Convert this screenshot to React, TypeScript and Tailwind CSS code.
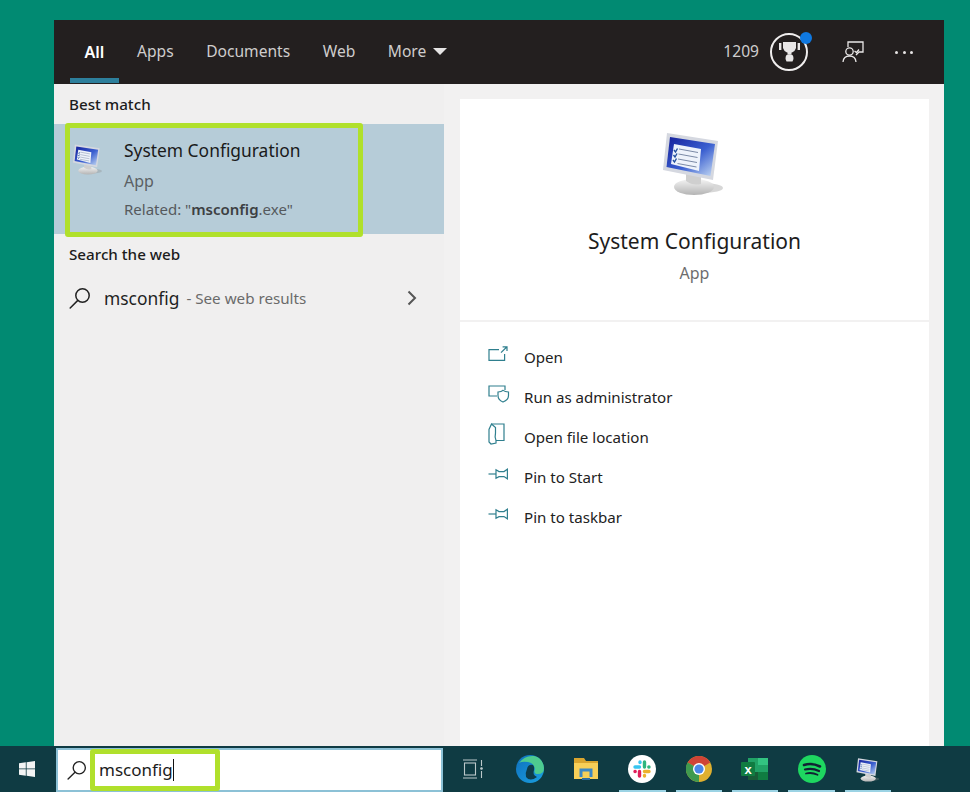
import React from "react";

function Monitor({ size, className = "" }: { size: number; className?: string }) {
  const id = `m${size}`;
  return (
    <svg width={size} height={size} viewBox="0 0 66 66" className={className}>
      <defs>
        <linearGradient id={`${id}s`} x1="0" y1="0" x2="1" y2="1">
          <stop offset="0" stopColor="#16209a" />
          <stop offset="0.55" stopColor="#3a5fd0" />
          <stop offset="1" stopColor="#c6dbf4" />
        </linearGradient>
        <linearGradient id={`${id}b`} x1="0" y1="0" x2="0" y2="1">
          <stop offset="0" stopColor="#f4f4f4" />
          <stop offset="1" stopColor="#b4b4b4" />
        </linearGradient>
      </defs>
      <ellipse cx="44" cy="58" rx="20" ry="5" fill="#8d8d8d" opacity="0.35" />
      <ellipse cx="35" cy="57" rx="20" ry="8" fill={`url(#${id}b)`} />
      <path d="M27 43 L42 47 L42 54 Q34 56 27 51 Z" fill="#cfcfcf" />
      <path d="M8 3 L59 11 L54 50 L4 40 Z" fill="#d5d8e0" />
      <path d="M11 7 L56 14 L51.5 46 L7.5 37 Z" fill={`url(#${id}s)`} />
      <path d="M15 14 L42 19 L40 41 L12 34 Z" fill="#eef3fb" />
      <path d="M20 19 L39 22.5 M19.5 24 L38.5 27.5 M19 29 L38 32.5 M18.5 33.5 L37.5 37" stroke="#7b8aa6" strokeWidth="1" />
      <path d="M15 20 L16.5 22 L18.5 18.5 M14.5 25 L16 27 L18 23.5 M14 30 L15.5 32 L17.5 28.5" stroke="#24509f" strokeWidth="1.4" fill="none" />
    </svg>
  );
}

function SearchIcon({ size, color }: { size: number; color: string }) {
  return (
    <svg width={size} height={size} viewBox="0 0 22 22" fill="none" stroke={color} strokeWidth="1.5">
      <circle cx="13.5" cy="8.5" r="6.7" />
      <path d="M8.8 13.4 L1.2 21" strokeLinecap="round" />
    </svg>
  );
}

const actionStroke = "#2f7f8e";

function OpenIcon() {
  return (
    <svg width="20" height="16" viewBox="0 0 20 16" fill="none" stroke={actionStroke} strokeWidth="1.2">
      <path d="M11 3.6 H1 V14.4 H16.6 V8" />
      <path d="M13 6.6 L19 0.8 M14.6 0.8 H19 V5" />
    </svg>
  );
}
function ShieldIcon() {
  return (
    <svg width="22" height="18" viewBox="0 0 22 18" fill="none" stroke={actionStroke} strokeWidth="1.2">
      <path d="M9 11 H1 V1 H17 V5" />
      <path d="M10 7 Q13.5 7 15 5.4 Q17 7 20.5 7 V10.5 Q20.5 15 15 17 Q10 15 10 10.5 Z" />
    </svg>
  );
}
function FolderIcon() {
  return (
    <svg width="18" height="22" viewBox="0 0 18 22" fill="none" stroke={actionStroke} strokeWidth="1.2">
      <path d="M3.5 1 H16 V17.5 H8" />
      <path d="M3.5 1 L7.5 4.5 V10 Q6.5 14 8 17.5 V20 L3 21 L1 19 V6.5 Z" />
    </svg>
  );
}
function PinIcon() {
  return (
    <svg width="20" height="12" viewBox="0 0 20 12" fill="none" stroke={actionStroke} strokeWidth="1.2">
      <path d="M0.5 6 H8" />
      <path d="M8 1.8 L11 3.6 H16 L19.4 1.2 V10.8 L16 8.6 H11 L8 10.2 Z" />
    </svg>
  );
}

function Trophy() {
  return (
    <div className="relative w-[38px] h-[38px] rounded-full border-[2.5px] border-[#f0eeee] flex items-center justify-center">
      <svg width="21" height="20" viewBox="0 0 21 20" fill="#e9e7e7">
        <rect x="0" y="1" width="2.4" height="7" />
        <rect x="18.6" y="1" width="2.4" height="7" />
        <path d="M4 0 H17 V6 Q16 9.5 13 10.5 H8 Q5 9.5 4 6 Z" />
        <rect x="8.5" y="10" width="4" height="2.5" />
        <path d="M7.5 13 Q10.5 11.5 13.5 13 Q15.5 16 13.5 19.5 H7.5 Q5.5 16 7.5 13 Z" />
      </svg>
      <span className="absolute -top-[3px] -right-[6px] w-[12px] h-[12px] rounded-full bg-[#0f78e0]" />
    </div>
  );
}

function Feedback() {
  return (
    <svg width="22" height="22" viewBox="0 0 22 22" fill="none" stroke="#e9e7e7" strokeWidth="1.3">
      <path d="M6 6 V1 H21 V11 H17 L14 14" />
      <circle cx="7.5" cy="10.5" r="3.7" />
      <path d="M1 21 Q1.5 15 7.5 15 Q13.5 15 14 21" />
      <path d="M12.5 10 L14.5 11.5 L17 8.5" />
    </svg>
  );
}

function TaskView() {
  return (
    <svg width="22" height="20" viewBox="0 0 22 20" fill="none" stroke="#bcc8ca" strokeWidth="1.1">
      <path d="M1 1 H15 M1 19 H15" />
      <rect x="2.5" y="4" width="11" height="12" />
      <path d="M19.5 1 V7 M19.5 12 V19" />
      <circle cx="19.5" cy="9.5" r="0.8" fill="#bcc8ca" />
    </svg>
  );
}

function Edge() {
  return (
    <svg width="28" height="28" viewBox="0 0 28 28">
      <defs>
        <linearGradient id="edgeA" x1="0" y1="0" x2="1" y2="1">
          <stop offset="0" stopColor="#0f6fbd" />
          <stop offset="1" stopColor="#1aa0e0" />
        </linearGradient>
      </defs>
      <circle cx="14" cy="14" r="14" fill="url(#edgeA)" />
      <path d="M3 8 Q9 0 18 1 Q27 3 28 13 Q28 19 22 19 Q17 19 19 14 Q18 8 12 7 Q6 6 3 8 Z" fill="#4ecb8f" />
      <path d="M11 14 Q12 9 17 10 Q19 12 18 15 Q16 20 21 22 Q14 27 10 22 Q9 18 11 14 Z" fill="#0e3c4a" />
    </svg>
  );
}

function Explorer() {
  return (
    <svg width="26" height="24" viewBox="0 0 26 24">
      <path d="M1 1 H11 L13 4 H25 V22 H1 Z" fill="#d9a52f" />
      <rect x="1" y="6" width="24" height="16" fill="#f7cf58" />
      <path d="M8 20 V13 H18 V20" fill="none" stroke="#3c88c4" strokeWidth="3" />
      <rect x="9" y="21" width="8" height="2" fill="#2c6c9f" />
    </svg>
  );
}

function Slack() {
  return (
    <svg width="28" height="28" viewBox="0 0 28 28">
      <circle cx="14" cy="14" r="14" fill="#fff" />
      <g strokeWidth="3.4" strokeLinecap="round" fill="none">
        <path d="M12 7 V7.5 M7 12 H11.5" stroke="#36c5f0" />
        <path d="M16.5 7 V12 M21 12 H20.8" stroke="#2eb67d" />
        <path d="M16.5 16.5 H21 M16.5 21 V20.5" stroke="#ecb22e" />
        <path d="M11.5 16.5 V21 M7 16.5 H7.2" stroke="#e01e5a" />
      </g>
    </svg>
  );
}

function Chrome() {
  return (
    <svg width="26" height="26" viewBox="0 0 26 26">
      <circle cx="13" cy="13" r="13" fill="#e0b02f" />
      <path d="M13 13 L1.7 6.5 A13 13 0 0 1 24.3 6.5 Z" fill="#cf4436" />
      <path d="M13 13 L1.7 6.5 A13 13 0 0 0 13 26 Z" fill="#3f9a4f" />
      <circle cx="13" cy="13" r="6" fill="#fff" />
      <circle cx="13" cy="13" r="4.6" fill="#4a88e8" />
    </svg>
  );
}

function Excel() {
  return (
    <svg width="28" height="24" viewBox="0 0 28 24">
      <rect x="7" y="1" width="20" height="22" fill="#21a366" />
      <rect x="17" y="1" width="10" height="7" fill="#33c481" />
      <rect x="17" y="15" width="10" height="8" fill="#107c41" />
      <rect x="7" y="15" width="10" height="8" fill="#185c37" />
      <rect x="0" y="5" width="14" height="14" rx="1" fill="#107c41" />
      <text x="7" y="16.5" textAnchor="middle" fontSize="13" fontWeight="700" fill="#fff" fontFamily="'Liberation Sans', sans-serif">x</text>
    </svg>
  );
}

function Spotify() {
  return (
    <svg width="28" height="28" viewBox="0 0 28 28" fill="none">
      <circle cx="14" cy="14" r="14" fill="#1ed760" />
      <path d="M6 10 Q14 7.5 22 11.5" stroke="#123" strokeWidth="2.6" strokeLinecap="round" />
      <path d="M7 14.5 Q14 12.5 21 16" stroke="#123" strokeWidth="2.2" strokeLinecap="round" />
      <path d="M8 18.5 Q14 17 19.5 19.8" stroke="#123" strokeWidth="1.8" strokeLinecap="round" />
    </svg>
  );
}

const actions: [React.ReactNode, string][] = [
  [<OpenIcon />, "Open"],
  [<ShieldIcon />, "Run as administrator"],
  [<FolderIcon />, "Open file location"],
  [<PinIcon />, "Pin to Start"],
  [<PinIcon />, "Pin to taskbar"],
];

const tabs = ["Apps", "Documents", "Web"];

const taskIcons: [React.ReactNode, boolean][] = [
  [<TaskView />, false],
  [<Edge />, false],
  [<Explorer />, false],
  [<Slack />, true],
  [<Chrome />, true],
  [<Excel />, true],
  [<Spotify />, true],
  [<Monitor size={25} />, true],
];

export default function App() {
  return (
    <div className="w-[970px] h-[792px] overflow-hidden bg-[#018a72] flex flex-col font-['Noto_Sans',sans-serif]">
      <div className="flex-1 min-h-0 pt-[20px] pl-[54px] pr-[26px] flex">
        <div className="w-[890px] flex flex-col">
          {/* Header */}
          <div className="h-[64px] bg-[#231f1f] flex items-center text-[15.6px] text-[#cfcdcd] shrink-0">
            <div className="relative ml-[16px] w-[49px] h-full pb-[1px] flex items-center justify-center text-[16px] font-semibold text-white">
              All
              <span className="absolute left-0 right-0 bottom-[1px] h-[5px] bg-[#2d7f9c]" />
            </div>
            <div className="flex items-center gap-[32.5px] ml-[18px] pb-[1px]">
              {tabs.map((t) => (
                <span key={t}>{t}</span>
              ))}
              <span className="flex items-center gap-[7px]">
                More
                <span className="w-0 h-0 border-l-[7px] border-r-[7px] border-t-[7px] border-l-transparent border-r-transparent border-t-[#e6e4e4]" />
              </span>
            </div>
            <div className="ml-auto flex items-center pr-[31px]">
              <span className="mr-[11px] pb-[1px]">1209</span>
              <Trophy />
              <span className="ml-[34px] mr-[31px] flex">
                <Feedback />
              </span>
              <span className="flex gap-[4.5px]">
                <i className="w-[3px] h-[3px] rounded-full bg-[#e6e4e4]" />
                <i className="w-[3px] h-[3px] rounded-full bg-[#e6e4e4]" />
                <i className="w-[3px] h-[3px] rounded-full bg-[#e6e4e4]" />
              </span>
            </div>
          </div>
          {/* Body */}
          <div className="flex-1 min-h-0 flex bg-[#f2f1f1]">
            {/* Left */}
            <div className="w-[390px] shrink-0 bg-[#f0efef] flex flex-col">
              <div className="h-[40px] pl-[15px] flex items-center text-[15.2px] font-medium text-[#1c1c1c]">Best match</div>
              <div className="relative h-[110px] bg-[#b6ccd8] flex">
                <div className="w-[70px] pl-[17px] pt-[19px]">
                  <Monitor size={32} />
                </div>
                <div className="pt-[13px] flex flex-col">
                  <span className="text-[17.4px] leading-[26px] text-[#1a1a1a]">System Configuration</span>
                  <span className="text-[16px] leading-[22px] mt-[7px] text-[#5b6064]">App</span>
                  <span className="text-[15px] leading-[20px] mt-[7px] text-[#55595d]">
                    Related: "<b className="font-semibold text-[#3d4043]">msconfig</b>.exe"
                  </span>
                </div>
                <div className="absolute left-[11px] -top-[1px] w-[298px] h-[114px] border-[5px] border-[#b0e02b] rounded-[3px]" />
              </div>
              <div className="h-[41px] pl-[15px] flex items-center text-[15.2px] font-medium text-[#1c1c1c]">Search the web</div>
              <div className="h-[46px] pl-[15px] pr-[27px] flex items-center">
                <SearchIcon size={22} color="#222" />
                <span className="ml-[13px] text-[17.4px] text-[#1f1f1f]">msconfig</span>
                <span className="ml-[7px] text-[15.2px] text-[#6a6a6a]">- See web results</span>
                <svg width="10" height="16" viewBox="0 0 10 16" fill="none" stroke="#555" strokeWidth="2" className="ml-auto">
                  <path d="M1.5 1.5 L8 8 L1.5 14.5" />
                </svg>
              </div>
            </div>
            {/* Right */}
            <div className="flex-1 min-w-0 pt-[15px] pl-[16px] pr-[15px] flex flex-col gap-[2px]">
              <div className="h-[221px] bg-white flex flex-col items-center shrink-0">
                <Monitor size={66} className="mt-[31px] mr-[6px]" />
                <span className="mt-[30px] text-[21px] leading-[30px] text-[#1d1d1d]">System Configuration</span>
                <span className="mt-[6px] text-[16px] leading-[22px] text-[#6d6d6d]">App</span>
              </div>
              <div className="flex-1 bg-white pt-[15px] flex flex-col">
                {actions.map(([icon, label]) => (
                  <div key={label} className="h-[40px] flex items-center pl-[28px]">
                    <span className="w-[36px] -mt-[6px] flex">{icon}</span>
                    <span className="text-[15.1px] text-[#222]">{label}</span>
                  </div>
                ))}
              </div>
            </div>
          </div>
        </div>
      </div>
      {/* Taskbar */}
      <div className="h-[46px] bg-[#0f3b43] flex items-stretch shrink-0">
        <div className="w-[56px] pr-[2px] flex items-center justify-center">
          <svg width="16" height="16" viewBox="0 0 16 16" fill="#f2f4f4">
            <path d="M0 2.3 L6.8 1.3 V7.5 H0 Z M7.6 1.2 L16 0 V7.5 H7.6 Z M0 8.3 H6.8 V14.7 L0 13.7 Z M7.6 8.3 H16 V16 L7.6 14.8 Z" />
          </svg>
        </div>
        <div className="relative w-[387px] h-[44px] mt-[2px] bg-white border-2 border-[#8cc1d6] flex items-center pl-[9px]">
          <SearchIcon size={20} color="#222" />
          <span className="ml-[12px] text-[17px] text-[#1c1c1c]">msconfig</span>
          <span className="w-[1.5px] h-[22px] bg-[#111]" />
          <div className="absolute left-[32px] top-[-1px] w-[130px] h-[42px] border-[5px] border-[#b0e02b] rounded-[3px]" />
        </div>
        <div className="flex pl-[2px]">
          {taskIcons.map(([icon, active], i) => (
            <div key={i} className="relative w-[56.4px] flex items-center justify-center">
              {icon}
              {active && <span className="absolute left-[5px] right-[5px] bottom-0 h-[2px] bg-[#9bd3e4]" />}
            </div>
          ))}
        </div>
      </div>
    </div>
  );
}
